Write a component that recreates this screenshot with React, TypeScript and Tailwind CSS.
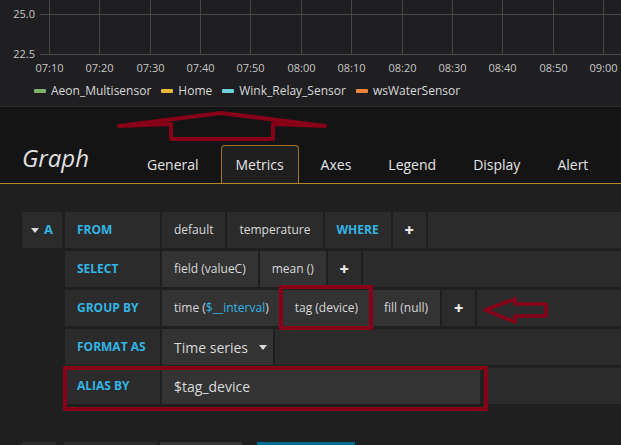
import React from "react";

type Part = { text: React.ReactNode; light?: boolean; plus?: boolean };

const ticks = ["07:10", "07:20", "07:30", "07:40", "07:50", "08:00", "08:10", "08:20", "08:30", "08:40", "08:50", "09:00"];

const legend = [
  { name: "Aeon_Multisensor", color: "bg-[#7eb26d]" },
  { name: "Home", color: "bg-[#eab839]" },
  { name: "Wink_Relay_Sensor", color: "bg-[#6ed0e0]" },
  { name: "wsWaterSensor", color: "bg-[#ef843c]" },
];

const tabs = ["General", "Metrics", "Axes", "Legend", "Display", "Alert"];

function Caret({ className = "" }: { className?: string }) {
  return (
    <svg width="8" height="5" viewBox="0 0 8 5" className={className}>
      <path d="M0 0 L8 0 L4 5 Z" fill="#d8d9da" />
    </svg>
  );
}

function Label({ children }: { children: React.ReactNode }) {
  return (
    <div className="flex w-[95px] shrink-0 items-center whitespace-nowrap bg-[#2b2b2b] px-3 text-[12px] font-bold text-[#33b5e5]">
      {children}
    </div>
  );
}

function Row({ label, parts }: { label: string; parts: Part[] }) {
  return (
    <div className="flex h-[36px] gap-[2px]">
      <Label>{label}</Label>
      {parts.map((p, i) =>
        p.plus ? (
          <div key={i} className="flex w-[33px] items-center justify-center bg-[#2b2b2b] text-[16px] font-extrabold text-[#e9e9e9]">
            +
          </div>
        ) : (
          <div
            key={i}
            className={`flex items-center whitespace-nowrap px-3 text-[12px] text-[#d8d9da] ${p.light ? "bg-[#333333]" : "bg-[#2b2b2b]"}`}
          >
            {p.text}
          </div>
        )
      )}
      <div className="flex-1 bg-[#2b2b2b]" />
    </div>
  );
}

export default function App() {
  return (
    <div className="relative h-[445px] w-[621px] overflow-hidden bg-[#1f1f20] font-['Open_Sans',sans-serif] text-[#d8d9da]">
      {/* Graph panel */}
      <div className="h-[107px] border-b border-[#2b2b2c] bg-[#1f1e20]">
        <svg width="621" height="78" className="block">
          <line x1="40" y1="14.5" x2="621" y2="14.5" stroke="#474747" />
          <line x1="40" y1="54.5" x2="621" y2="54.5" stroke="#4a4a4a" />
          {ticks.map((t, i) => {
            const x = Math.round(49 + 50.36 * i) + 0.5;
            return (
              <g key={t}>
                <line x1={x} y1="0" x2={x} y2="54" stroke="#474747" />
                <text x={x} y="72" fill="#c8c8c8" fontSize="11" textAnchor="middle" fontFamily="Open Sans">
                  {t}
                </text>
              </g>
            );
          })}
          <text x="35" y="18" fill="#c8c8c8" fontSize="11" textAnchor="end" fontFamily="Open Sans">25.0</text>
          <text x="35" y="58" fill="#c8c8c8" fontSize="11" textAnchor="end" fontFamily="Open Sans">22.5</text>
        </svg>
        <div className="flex h-[26px] items-center gap-[10px] pl-[34px] text-[12px]">
          {legend.map((l) => (
            <div key={l.name} className="flex items-center gap-[5px]">
              <span className={`h-[4px] w-[12px] rounded-[1px] ${l.color}`} />
              <span>{l.name}</span>
            </div>
          ))}
        </div>
      </div>

      {/* Editor header */}
      <div className="flex h-[77px] items-end border-b border-[#b8852c] bg-[#141414] pl-[22px]">
        <div className="mb-[9px] w-[110px] text-[24px] italic leading-[32px] text-[#e0e0e0]">Graph</div>
        <div className="flex gap-[7px]">
          {tabs.map((t) =>
            t === "Metrics" ? (
              <div
                key={t}
                className="-mb-px flex h-[38px] items-center rounded-t-[4px] border border-b-0 border-[#a8742a] bg-[#1f1f20] px-[14px] text-[14px] text-[#e4e4e4]"
              >
                {t}
              </div>
            ) : (
              <div key={t} className="flex h-[38px] items-center border border-transparent px-[14px] text-[14px] text-[#e4e4e4]">
                {t}
              </div>
            )
          )}
        </div>
      </div>

      {/* Query editor */}
      <div className="flex pl-[22px] pt-[28px]">
        <div className="flex h-[36px] w-[40px] items-center gap-[5px] bg-[#2b2b2b] pl-[9px]">
          <Caret />
          <span className="text-[13px] font-bold text-[#33b5e5]">A</span>
        </div>
        <div className="ml-[3px] flex flex-1 flex-col gap-[3px]">
          <Row label="FROM" parts={[{ text: "default" }, { text: "temperature" }, { text: <span className="font-bold text-[#33b5e5]">WHERE</span> }, { text: "+", plus: true }]} />
          <Row label="SELECT" parts={[{ text: "field (valueC)", light: true }, { text: "mean ()", light: true }, { text: "+", plus: true }]} />
          <Row
            label="GROUP BY"
            parts={[
              { text: <span>time (<span className="text-[#33b5e5]">$__interval</span>)</span>, light: true },
              { text: "tag (device)", light: true },
              { text: "fill (null)", light: true },
              { text: "+", plus: true },
            ]}
          />
          <div className="flex h-[36px] gap-[2px]">
            <Label>FORMAT AS</Label>
            <div className="flex w-[111px] items-center justify-between bg-[#333333] pl-3 pr-[6px] text-[14px] text-[#d8d9da]">
              <span>Time series</span>
              <Caret />
            </div>
            <div className="flex-1 bg-[#2b2b2b]" />
          </div>
          <div className="flex h-[36px] gap-[2px]">
            <Label>ALIAS BY</Label>
            <div className="flex w-[320px] items-center border-r-2 border-[#222222] bg-[#333333] px-3 text-[14px] text-[#d8d9da]">$tag_device</div>
            <div className="flex-1 bg-[#2b2b2b]" />
          </div>
        </div>
      </div>

      {/* Buttons below (cut off) */}
      <div className="mt-[38px] flex pl-[22px]">
        <div className="h-[30px] w-[34px] bg-[#2b2b2b]" />
        <div className="ml-[8px] h-[30px] w-[93px] bg-[#2b2b2b]" />
        <div className="ml-[3px] h-[30px] w-[82px] bg-[#353535]" />
        <div className="ml-[15px] h-[30px] w-[98px] bg-[#006e91]" />
      </div>

      {/* Red annotations */}
      <div className="absolute left-[279px] top-[285px] h-[45px] w-[94px] border-4 border-[#870017]" />
      <div className="absolute left-[63px] top-[366px] h-[45px] w-[425px] border-4 border-[#870017]" />
      <svg className="absolute left-0 top-0" width="621" height="445">
        <polygon
          points="119,126 221,113 325,126 273,124 273,139 171,139 171,124"
          fill="none"
          stroke="#870017"
          strokeWidth="4"
          strokeLinejoin="round"
        />
        <polygon
          points="485,310 515,299 515,304 546,304 546,316 515,316 515,322"
          fill="none"
          stroke="#870017"
          strokeWidth="3.5"
          strokeLinejoin="round"
        />
      </svg>
    </div>
  );
}
